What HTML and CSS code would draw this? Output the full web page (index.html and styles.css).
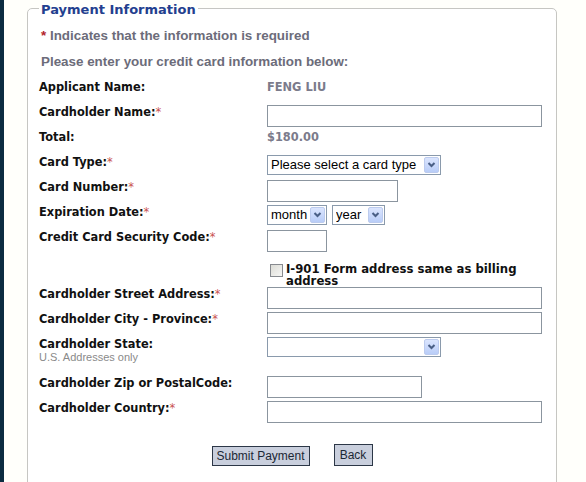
FILE: index.html
```html
<!DOCTYPE html>
<html>
<head>
<meta charset="utf-8">
<link rel="stylesheet" href="styles.css">
</head>
<body>
<div class="page">
  <fieldset class="panel">
    <legend>Payment Information</legend>
    <p class="note"><span class="req">*</span> Indicates that the information is required</p>
    <p class="intro">Please enter your credit card information below:</p>
    <div class="form">
      <div class="row"><span class="lbl">Applicant Name:</span><span class="val">FENG LIU</span></div>
      <div class="row"><span class="lbl">Cardholder Name:<span class="star">*</span></span><input class="txt w-full" type="text"></div>
      <div class="row"><span class="lbl">Total:</span><span class="val">$180.00</span></div>
      <div class="row"><span class="lbl">Card Type:<span class="star">*</span></span>
        <div class="ctl"><span class="sel w-type"><select><option>Please select a card type</option></select><span class="arrow"><svg width="9" height="6" viewBox="0 0 9 6"><polyline points="1.5,1 4.5,4 7.5,1" fill="none" stroke="#4a5f86" stroke-width="2"/></svg></span></span></div>
      </div>
      <div class="row"><span class="lbl">Card Number:<span class="star">*</span></span><input class="txt w-num" type="text"></div>
      <div class="row"><span class="lbl">Expiration Date:<span class="star">*</span></span>
        <div class="ctl pair">
          <span class="sel w-month"><select><option>month</option></select><span class="arrow"><svg width="9" height="6" viewBox="0 0 9 6"><polyline points="1.5,1 4.5,4 7.5,1" fill="none" stroke="#4a5f86" stroke-width="2"/></svg></span></span>
          <span class="sel w-year"><select><option>year</option></select><span class="arrow"><svg width="9" height="6" viewBox="0 0 9 6"><polyline points="1.5,1 4.5,4 7.5,1" fill="none" stroke="#4a5f86" stroke-width="2"/></svg></span></span>
        </div>
      </div>
      <div class="row row-sec"><span class="lbl">Credit Card Security Code:<span class="star">*</span></span><input class="txt w-sec" type="text"></div>
      <div class="row row-chk"><span></span>
        <label class="chkline"><input class="chk" type="checkbox"><span class="chktext">I-901 Form address same as billing address</span></label>
      </div>
      <div class="row"><span class="lbl">Cardholder Street Address:<span class="star">*</span></span><input class="txt w-full" type="text"></div>
      <div class="row"><span class="lbl">Cardholder City - Province:<span class="star">*</span></span><input class="txt w-full" type="text"></div>
      <div class="row row-state"><span class="lbl">Cardholder State:<span class="sub">U.S. Addresses only</span></span>
        <div class="ctl"><span class="sel w-type"><select><option></option></select><span class="arrow"><svg width="9" height="6" viewBox="0 0 9 6"><polyline points="1.5,1 4.5,4 7.5,1" fill="none" stroke="#4a5f86" stroke-width="2"/></svg></span></span></div>
      </div>
      <div class="row"><span class="lbl">Cardholder Zip or PostalCode:</span><input class="txt w-zip" type="text"></div>
      <div class="row"><span class="lbl">Cardholder Country:<span class="star">*</span></span><input class="txt w-full" type="text"></div>
    </div>
    <div class="actions">
      <button class="btn btn-submit" type="button">Submit Payment</button>
      <button class="btn btn-back" type="button">Back</button>
    </div>
  </fieldset>
</div>
</body>
</html>
```

FILE: styles.css
```css
* { box-sizing: border-box; }

body {
  margin: 0;
  background: #fffffb;
}

.page {
  border-left: 4px solid #0c2c40;
  background: #fffffb;
  min-height: 482px;
  padding-left: 23px;
  overflow: hidden;
  font-family: "DejaVu Sans", Verdana, sans-serif;
}

.panel {
  width: 530px;
  margin: 0;
  padding: 11px 11px 60px;
  border: 1px solid #c6c6c2;
  border-radius: 5px;
  background: #ffffff;
  min-inline-size: 0;
}

.panel legend {
  padding: 3px 2px 0;
  font: bold 13px/14px "DejaVu Sans", Verdana, sans-serif;
  color: #23408e;
}

.note,
.intro {
  margin: 0;
  font: bold 13.4px/16px "Liberation Sans", Arial, sans-serif;
  color: #6c6c7a;
  padding-left: 2px;
}

.note { margin-bottom: 10px; }
.intro { margin-bottom: 10px; }

.req { color: #b3242b; }

.row {
  display: grid;
  grid-template-columns: 228px auto;
  align-items: start;
  height: 25px;
}

.row-sec { height: 33px; }
.row-chk { height: 24px; }
.row-state { height: 39px; }

.lbl {
  padding-top: 1px;
  font: bold 11.4px/13px "DejaVu Sans", Verdana, sans-serif;
  color: #111;
}

.star {
  color: #c9524f;
  font-weight: normal;
}

.sub {
  display: block;
  font: 11px/12px "Liberation Sans", Arial, sans-serif;
  color: #8a8a8a;
}

.val {
  padding-top: 1px;
  font: bold 11.4px/13px "DejaVu Sans", Verdana, sans-serif;
  color: #7b7b8b;
}

.txt {
  display: block;
  height: 22px;
  margin: 0;
  padding: 0 3px;
  border: 1px solid #8b959f;
  background: #fff;
  font: 13px "Liberation Sans", Arial, sans-serif;
}

.w-full { width: 275px; }
.w-num { width: 131px; }
.w-sec { width: 60px; }
.w-zip { width: 155px; }

.ctl { display: flex; }
.pair { gap: 5px; }

.sel {
  display: inline-flex;
  align-items: center;
  height: 20px;
  border: 1px solid #8a9aac;
  background: #fff;
  padding-right: 1px;
}

.sel select {
  appearance: none;
  -webkit-appearance: none;
  flex: 1;
  min-width: 0;
  height: 18px;
  margin: 0;
  padding: 0 0 0 3px;
  border: 0;
  background: transparent;
  font: 13px/18px "Liberation Sans", Arial, sans-serif;
  color: #000;
  outline: none;
}

.arrow {
  flex: none;
  width: 15px;
  height: 16px;
  display: flex;
  align-items: center;
  justify-content: center;
  background: linear-gradient(#dbe5fe, #b9cdf8);
  border: 1px solid #bccbee;
  border-radius: 2px;
}

.w-type { width: 174px; }
.w-month { width: 60px; }
.w-year { width: 53px; }

.chkline {
  display: flex;
  align-items: flex-start;
}

.chk {
  appearance: none;
  -webkit-appearance: none;
  flex: none;
  width: 13px;
  height: 13px;
  margin: 1px 3px 0 3px;
  border: 1px solid #878a8f;
  background: linear-gradient(135deg, #dcdcd6, #f6f6f4);
}

.chktext {
  width: 250px;
  font: bold 11.7px/12px "DejaVu Sans", Verdana, sans-serif;
  color: #111;
}

.actions {
  display: flex;
  justify-content: center;
  align-items: flex-end;
  gap: 24px;
  margin-top: 18px;
}

.btn {
  margin: 0;
  padding: 0;
  background: #c9cfdd;
  border: 1px solid #2c3747;
  font: 12px "Liberation Sans", Arial, sans-serif;
  color: #1b2735;
}

.btn-submit { width: 98px; height: 20px; }
.btn-back { width: 39px; height: 22px; }
```
